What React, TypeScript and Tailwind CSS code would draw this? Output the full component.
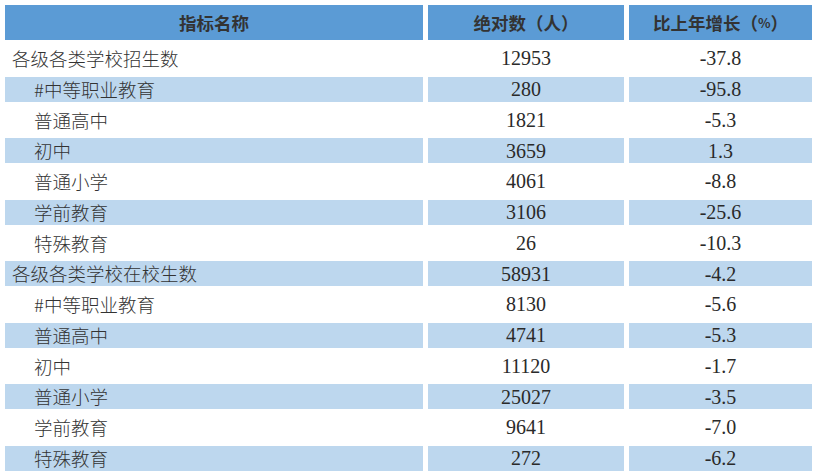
const rows: [string, string, string, boolean][] = [
  ["各级各类学校招生数", "12953", "-37.8", false],
  ["#中等职业教育", "280", "-95.8", true],
  ["普通高中", "1821", "-5.3", true],
  ["初中", "3659", "1.3", true],
  ["普通小学", "4061", "-8.8", true],
  ["学前教育", "3106", "-25.6", true],
  ["特殊教育", "26", "-10.3", true],
  ["各级各类学校在校生数", "58931", "-4.2", false],
  ["#中等职业教育", "8130", "-5.6", true],
  ["普通高中", "4741", "-5.3", true],
  ["初中", "11120", "-1.7", true],
  ["普通小学", "25027", "-3.5", true],
  ["学前教育", "9641", "-7.0", true],
  ["特殊教育", "272", "-6.2", true],
];

const cjk = { fontFamily: '"Noto Sans CJK SC", sans-serif' };
const num = { fontFamily: '"Liberation Serif", "Noto Sans CJK SC", serif' };

export default function App() {
  return (
    <div className="w-[813px] h-[471px] bg-white overflow-hidden pt-[5px] pl-[5px]">
      <div className="flex flex-col gap-y-[5.75px]">
        <div className="grid grid-cols-[418px_196px_183px] gap-x-[5px] h-[35px] text-[#333] font-bold leading-none" style={cjk}>
          <div className="bg-[#5b9bd5] flex items-center justify-center text-[17.5px]">指标名称</div>
          <div className="bg-[#5b9bd5] flex items-center justify-center text-[17.5px]">绝对数（人）</div>
          <div className="bg-[#5b9bd5] flex items-center justify-center text-[17.5px]">
            比上年增长（<span className="text-[13px]">%</span>）
          </div>
        </div>
        {rows.map(([name, a, b, sub], i) => {
          const bg = i % 2 === 1 ? "bg-[#bdd7ee]" : "bg-white";
          return (
            <div key={i} className="grid grid-cols-[418px_196px_183px] gap-x-[5px] h-[25px] text-[#2a2a2a] leading-none">
              <div className={`${bg} flex items-center text-[18.5px] font-light text-[#333] ${sub ? "pl-[29px]" : "pl-[7px]"}`} style={cjk}>
                {name}
              </div>
              <div className={`${bg} flex items-center justify-center text-[20px]`} style={num}>{a}</div>
              <div className={`${bg} flex items-center justify-center text-[20px]`} style={num}>{b}</div>
            </div>
          );
        })}
      </div>
    </div>
  );
}
